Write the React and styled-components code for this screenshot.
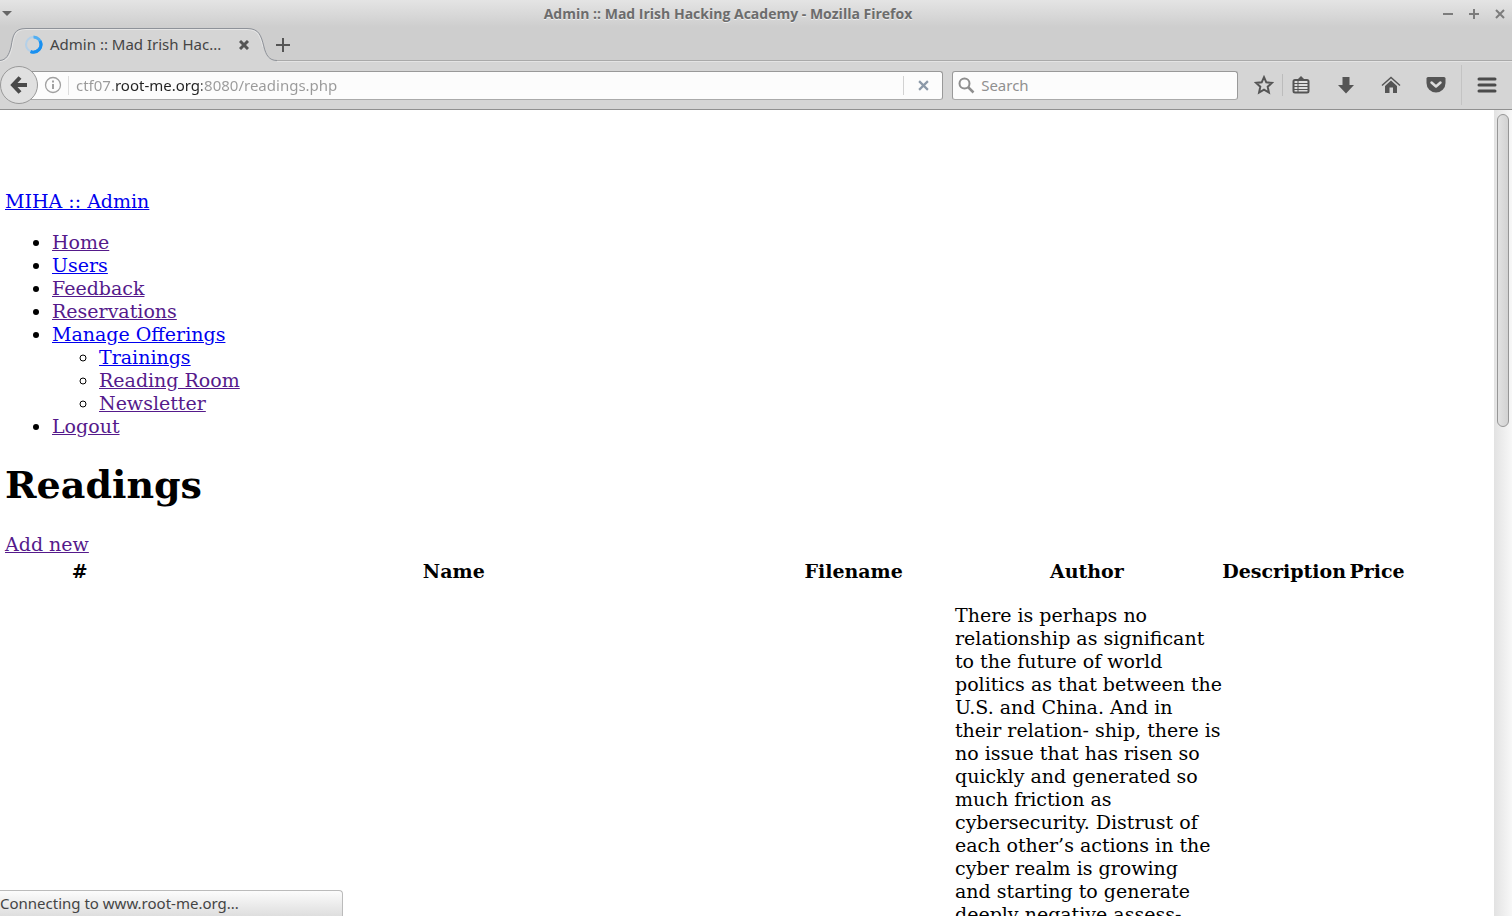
import React from "react";
import styled, { createGlobalStyle } from "styled-components";

const ui = `"Noto Sans", "Open Sans", sans-serif`;
const serif = `"DejaVu Serif", serif`;

const GlobalStyle = createGlobalStyle`
  * { box-sizing: border-box; }
  body { margin: 0; background: #fff; overflow: hidden; }
  button, input { font-family: inherit; font-size: inherit; padding: 0; margin: 0; border: 0; outline: 0; background: none; }
`;

const Window = styled.div`
  position: relative;
  display: flex;
  flex-direction: column;
  height: 100vh;
  font-family: ${ui};
  font-size: 15px;
  color: #444;
`;

const TitleBar = styled.header`
  display: grid;
  grid-template-columns: 60px 1fr 116px;
  align-items: center;
  height: 27px;
  flex: none;
  background: linear-gradient(#e4e4e4, #cecece);
`;

const WindowTitle = styled.div`
  text-align: center;
  font-family: "Open Sans", sans-serif;
  font-size: 14px;
  font-weight: 700;
  line-height: 27px;
  color: #6c6c6c;
  text-shadow: 0 1px 0 #eee;
  white-space: nowrap;
`;

const WindowButtons = styled.div`
  display: flex;
  justify-content: flex-end;
  gap: 12px;
  padding-right: 5px;
`;

const IconButton = styled.button`
  display: flex;
  align-items: center;
  justify-content: center;
  flex: none;
  width: ${(p) => p.$width || 14}px;
  height: ${(p) => p.$height || 14}px;
  color: ${(p) => p.$color || "#555"};
`;

const TabStrip = styled.div`
  display: flex;
  align-items: flex-start;
  height: 35px;
  flex: none;
  background: linear-gradient(#cecece 33px, #aaa 33px, #aaa 34px, #e4e4e4 34px);
`;

const Tab = styled.div`
  position: relative;
  display: flex;
  align-items: center;
  width: 272px;
  height: 35px;
  padding: 0 21px 0 24px;
`;

const TabShape = styled.svg`
  position: absolute;
  left: 0;
  top: 0;
`;

const TabLabel = styled.span`
  position: relative;
  flex: 1;
  padding-left: 7px;
  line-height: 35px;
  white-space: nowrap;
`;

const Spinner = styled.svg`
  position: relative;
  flex: none;
`;

const TabClose = styled(IconButton)`
  position: relative;
`;

const Toolbar = styled.div`
  display: flex;
  align-items: center;
  height: 48px;
  flex: none;
  padding-bottom: 1px;
  border-bottom: 1px solid #909090;
  background: #d5d5d5;
`;

const BackButton = styled.button`
  position: relative;
  display: flex;
  align-items: center;
  justify-content: center;
  flex: none;
  width: 38px;
  height: 38px;
  margin-right: -10px;
  border: 1px solid #999;
  border-radius: 50%;
  background: #e0e0e0;
  color: #4a4a4a;
`;

const Field = styled.div`
  display: flex;
  align-items: center;
  height: 29px;
  border: 1px solid #999;
  border-bottom-color: #aaa;
  border-radius: 3px;
  background: #fcfcfc;
`;

const AddressField = styled(Field)`
  flex: 918;
  padding-left: 15px;
`;

const SearchField = styled(Field)`
  flex: 285;
  margin-left: 9px;
  padding-left: 5px;
`;

const AddressInput = styled.input`
  flex: 1;
  min-width: 0;
  height: 27px;
  color: transparent;
  background: linear-gradient(90deg, #999 38px, #222 38px, #222 126px, #999 126px);
  background-clip: text;
  -webkit-background-clip: text;
`;

const SearchInput = styled.input`
  flex: 1;
  min-width: 0;
  height: 27px;
  padding-left: 6px;
  &::placeholder { color: #909090; opacity: 1; }
`;

const Divider = styled.span`
  flex: none;
  width: 1px;
  height: ${(p) => p.$height}px;
  margin-left: ${(p) => p.$before || 0}px;
  margin-right: ${(p) => p.$after || 0}px;
  background: ${(p) => p.$color || "#bcbcbc"};
`;

const Tools = styled.nav`
  display: flex;
  align-items: center;
  flex: none;
  padding: 0 14px 0 15px;
`;

const ToolGroup = styled.div`
  display: flex;
  gap: 23px;
`;

const Viewport = styled.div`
  display: flex;
  flex: 1;
  min-height: 0;
  overflow: hidden;
`;

const Page = styled.main`
  flex: 1;
  min-width: 0;
  padding: 80px 5px 0;
  overflow: hidden;
  background: #fff;
  font-family: ${serif};
  font-size: 19px;
  line-height: 23px;
  color: #000;
`;

const ScrollTrack = styled.div`
  flex: none;
  width: 18px;
  padding: 4px 3px;
  background: linear-gradient(90deg, #e2e2e2, #f8f8f8);
`;

const ScrollThumb = styled.div`
  width: 12px;
  height: 313px;
  border: 1px solid #969696;
  border-radius: 6px;
  background: linear-gradient(90deg, #e2e2e2, #d2d2d2);
`;

const Link = styled.a`
  color: ${(p) => (p.$visited ? "#551a8b" : "#0000ee")};
  text-decoration: underline;
`;

const Menu = styled.ul`
  margin: 18px 0 24px;
  padding-left: 47px;
  list-style: disc;
`;

const SubMenu = styled.ul`
  margin: 0;
  padding-left: 47px;
  list-style: circle;
`;

const Heading = styled.h1`
  margin: 0 0 26px;
  font-size: 38px;
  line-height: 45px;
`;

const Table = styled.table`
  width: 100%;
  table-layout: fixed;
  border-spacing: 2px;
`;

const Column = styled.col`
  width: ${(p) => p.$share}%;
`;

const HeaderCell = styled.th`
  padding: 2px 0;
  text-align: center;
  white-space: nowrap;
`;

const Cell = styled.td`
  padding: 0 1px;
  vertical-align: top;
`;

const Abstract = styled.p`
  margin: 17px 0;
  white-space: pre;
`;

const Status = styled.div`
  position: absolute;
  left: 0;
  bottom: 0;
  width: 343px;
  height: 26px;
  border: 1px solid #bbb;
  border-left: 0;
  border-bottom: 0;
  border-top-right-radius: 4px;
  background: linear-gradient(#fcfcfc, #dedede);
  line-height: 24px;
`;

const Cross = ({ size = 10, width = 3 }) => (
  <svg width={size} height={size} viewBox="0 0 10 10" fill="none" stroke="currentColor" strokeWidth={width}>
    <path d="M1 1 9 9M9 1 1 9" />
  </svg>
);

const items = [
  { label: "Home", visited: true },
  { label: "Users" },
  { label: "Feedback", visited: true },
  { label: "Reservations", visited: true },
  {
    label: "Manage Offerings",
    children: [
      { label: "Trainings" },
      { label: "Reading Room", visited: true },
      { label: "Newsletter", visited: true },
    ],
  },
  { label: "Logout", visited: true },
];

const columns = [
  { label: "#", share: 9.9 },
  { label: "Name", share: 40.8 },
  { label: "Filename", share: 13.4 },
  { label: "Author", share: 18.1 },
  { label: "Description", share: 8.5 },
  { label: "Price", share: 3.9 },
  { label: "", share: 5.4 },
];

const abstract = `There is perhaps no
relationship as significant
to the future of world
politics as that between the
U.S. and China. And in
their relation- ship, there is
no issue that has risen so
quickly and generated so
much friction as
cybersecurity. Distrust of
each other’s actions in the
cyber realm is growing
and starting to generate
deeply negative assess-`;

const MenuItem = ({ item }) => (
  <li>
    <Link href="#" $visited={item.visited}>{item.label}</Link>
    {item.children && (
      <SubMenu>
        {item.children.map((child) => <MenuItem key={child.label} item={child} />)}
      </SubMenu>
    )}
  </li>
);

export default function App() {
  return (
    <Window>
      <GlobalStyle />
      <TitleBar>
        <IconButton aria-label="Window menu">
          <svg width="10" height="6" viewBox="0 0 10 6"><path d="M0 0h10L5 5z" fill="#666" /></svg>
        </IconButton>
        <WindowTitle>Admin :: Mad Irish Hacking Academy - Mozilla Firefox</WindowTitle>
        <WindowButtons>
          <IconButton aria-label="Minimize" $color="#7c7c7c">
            <svg width="10" height="10"><path d="M0 5h10" stroke="currentColor" strokeWidth="2" /></svg>
          </IconButton>
          <IconButton aria-label="Maximize" $color="#7c7c7c">
            <svg width="10" height="10"><path d="M0 5h10M5 0v10" stroke="currentColor" strokeWidth="2" /></svg>
          </IconButton>
          <IconButton aria-label="Close window" $color="#7c7c7c"><Cross width={2} /></IconButton>
        </WindowButtons>
      </TitleBar>

      <TabStrip>
        <Tab>
          <TabShape width="278" height="35" viewBox="0 0 278 35">
            <path d="M0 35V33.500C6 33 9 28 11 20 13 8 14 1.500 26 1.500H247C259 1.500 261 8 264 20 266 28 269 33.500 277 33.500V35Z" fill="#d5d5d5" />
            <path d="M0 34.500C8 33.500 10 29 12 20 14 9 15 2.500 26 2.500H247C258 2.500 260 9 263 20" fill="none" stroke="#e6e6e6" />
            <path d="M0 33.500C6 33 9 28 11 20 13 8 14 1.500 26 1.500H247C259 1.500 261 8 264 20 266 28 269 33.500 277 33.500" fill="none" stroke="#8e9299" />
          </TabShape>
          <Spinner width="19" height="19" viewBox="0 0 19 19" fill="none">
            <circle cx="9.500" cy="9.500" r="7.500" stroke="#b4d0e8" strokeWidth="2" />
            <path d="M9.500 2A7.500 7.500 0 0 1 9.500 17" stroke="#51aef2" strokeWidth="3" />
            <path d="M16 6A7.500 7.500 0 0 1 6.500 16.500" stroke="#1990f0" strokeWidth="3" />
          </Spinner>
          <TabLabel>Admin :: Mad Irish Hac...</TabLabel>
          <TabClose aria-label="Close tab"><Cross /></TabClose>
        </Tab>
        <IconButton aria-label="New tab" $width={22} $height={35}>
          <svg width="14" height="14"><path d="M0 7h14M7 0v14" stroke="currentColor" strokeWidth="2" /></svg>
        </IconButton>
      </TabStrip>

      <Toolbar>
        <BackButton aria-label="Back">
          <svg width="18" height="18" viewBox="0 0 18 18" fill="none" stroke="currentColor">
            <path d="M10 1.500 3 9 10 16.500" strokeWidth="4" />
            <path d="M4 9H17" strokeWidth="4" />
          </svg>
        </BackButton>
        <AddressField>
          <IconButton aria-label="Site information" $width={18} $height={18} $color="#a0a0a0">
            <svg width="18" height="18" viewBox="0 0 18 18" fill="none" stroke="currentColor">
              <circle cx="9" cy="9" r="7.500" strokeWidth="1.300" />
              <path d="M9 8v5M9 4.500v2" strokeWidth="2" />
            </svg>
          </IconButton>
          <Divider $height={19} $before={6} $after={7} $color="#ddd" />
          <AddressInput aria-label="Address" type="text" defaultValue="ctf07.root-me.org:8080/readings.php" />
          <Divider $height={19} $color="#d2d2d2" />
          <IconButton aria-label="Stop loading" $width={38} $height={27} $color="#8c99a8"><Cross size={11} width={2} /></IconButton>
        </AddressField>
        <SearchField>
          <svg width="17" height="17" viewBox="0 0 17 17" fill="none" stroke="#8e8e8e" aria-hidden="true">
            <circle cx="6.500" cy="6.500" r="5" strokeWidth="2" />
            <path d="M10 10 15.500 15.500" strokeWidth="2.500" />
          </svg>
          <SearchInput aria-label="Search" type="text" placeholder="Search" />
        </SearchField>
        <Tools>
          <IconButton aria-label="Bookmark this page" $width={22} $height={22}>
            <svg width="20" height="20" viewBox="0 0 20 20" fill="none" stroke="currentColor" strokeWidth="2">
              <path d="M10 2.200 12.300 7.300 17.900 7.900 13.700 11.700 14.900 17.500 10 14.600 5.100 17.500 6.300 11.700 2.100 7.900 7.700 7.300Z" />
            </svg>
          </IconButton>
          <Divider $height={22} $before={7} $after={7} />
          <ToolGroup>
            <IconButton aria-label="Bookmarks menu" $width={22} $height={22}>
              <svg width="18" height="18" viewBox="0 0 18 18">
                <path d="M5 4 9 0l4 4z" fill="#555" />
                <rect x="1.500" y="4" width="15" height="12.500" rx="1.500" fill="#dedede" stroke="#555" strokeWidth="2" />
                <path d="M2 7.500h14M2 10.500h14M2 13.500h14" stroke="#555" />
                <path d="M6 5v11" stroke="#555" />
              </svg>
            </IconButton>
            <IconButton aria-label="Downloads" $width={22} $height={22}>
              <svg width="18" height="18" viewBox="0 0 18 18"><path d="M5.500 1h7v8H17L9 17.500 1 9H5.500z" fill="currentColor" /></svg>
            </IconButton>
            <IconButton aria-label="Home page" $width={22} $height={22}>
              <svg width="20" height="18" viewBox="0 0 20 18">
                <path d="M1 9.500 10 1.500 19 9.500" fill="none" stroke="currentColor" strokeWidth="1.500" />
                <path d="M10 4.500 16 10v7h-4v-5.500H8.500V17H4v-7z" fill="currentColor" />
              </svg>
            </IconButton>
            <IconButton aria-label="Pocket" $width={22} $height={22}>
              <svg width="20" height="18" viewBox="0 0 20 18">
                <path d="M2 1h16q1.500 0 1.500 1.500V7A9.500 9.500 0 0 1 .5 7V2.500Q.5 1 2 1z" fill="currentColor" />
                <path d="M5.500 6.500 10 10.500l4.500-4" fill="none" stroke="#ddd" strokeWidth="2.500" strokeLinecap="round" strokeLinejoin="round" />
              </svg>
            </IconButton>
          </ToolGroup>
          <Divider $height={40} $before={14} $after={14} $color="#c3c3c3" />
          <IconButton aria-label="Open menu" $width={22} $height={22}>
            <svg width="20" height="16" viewBox="0 0 20 16">
              <path d="M2 2h16M2 8h16M2 14h16" stroke="#4b4b4b" strokeWidth="3" strokeLinecap="round" />
            </svg>
          </IconButton>
        </Tools>
      </Toolbar>

      <Viewport>
        <Page>
          <Link href="#">MIHA :: Admin</Link>
          <Menu>
            {items.map((item) => <MenuItem key={item.label} item={item} />)}
          </Menu>
          <Heading>Readings</Heading>
          <Link href="#" $visited>Add new</Link>
          <Table>
            <colgroup>
              {columns.map((c) => <Column key={c.label} $share={c.share} />)}
            </colgroup>
            <thead>
              <tr>{columns.map((c) => <HeaderCell key={c.label}>{c.label}</HeaderCell>)}</tr>
            </thead>
            <tbody>
              <tr>
                <Cell /><Cell /><Cell />
                <Cell>
                  <Abstract>{abstract}</Abstract>
                </Cell>
                <Cell /><Cell /><Cell />
              </tr>
            </tbody>
          </Table>
        </Page>
        <ScrollTrack><ScrollThumb /></ScrollTrack>
      </Viewport>
      <Status role="status">Connecting to www.root-me.org...</Status>
    </Window>
  );
}
